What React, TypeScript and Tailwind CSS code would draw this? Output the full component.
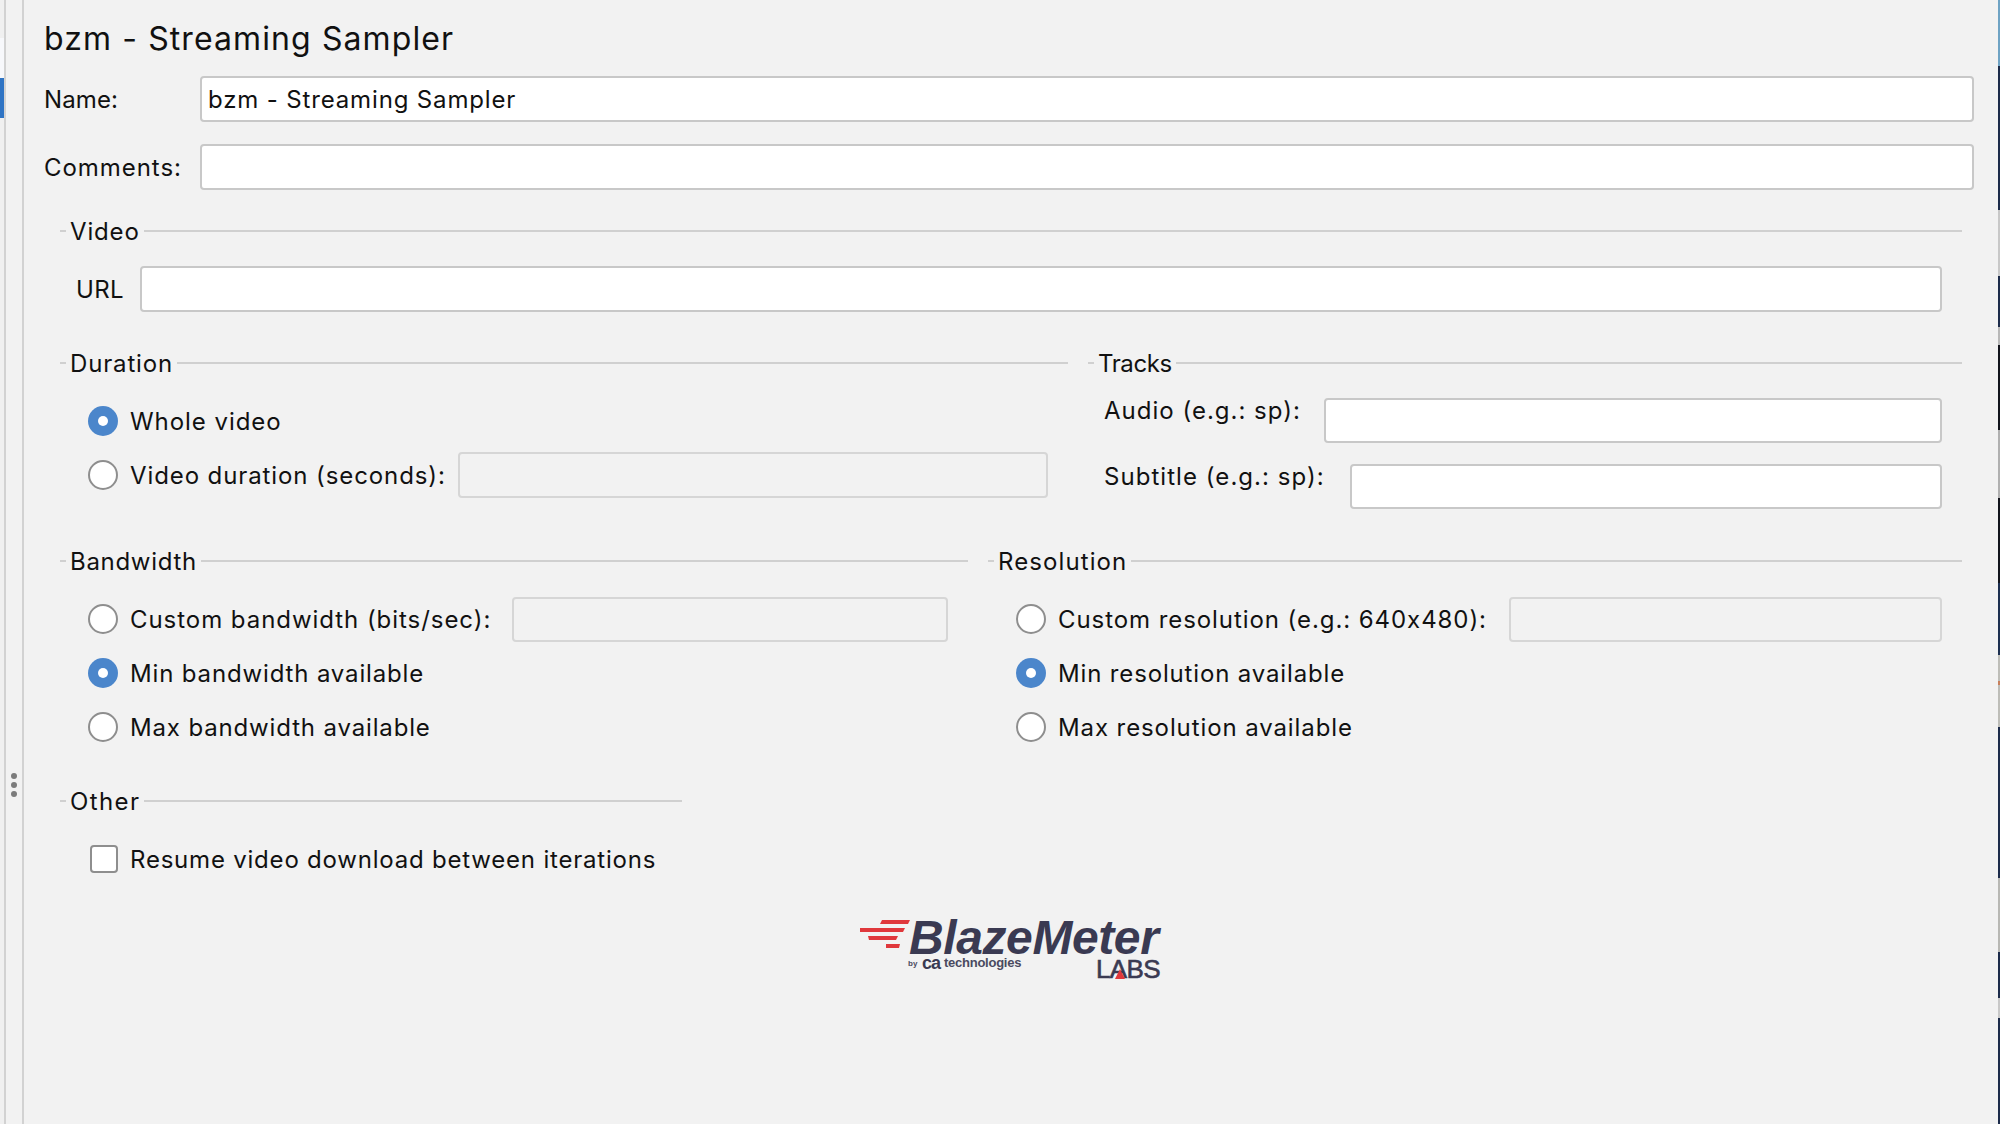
const font = "font-['Inter','Liberation_Sans',sans-serif]";
const text = "pt-[2px] text-[24px] text-[#111] whitespace-nowrap";

function Legend({ label, t = "tracking-[0.85px]" }: { label: string; t?: string }) {
  return (
    <div className="flex h-[30px] items-center">
      <div className="h-[2px] w-[6px] bg-[#d0d0d0]" />
      <span className={`mx-[4px] leading-[30px] ${text} ${t}`}>{label}</span>
      <div className="h-[2px] flex-1 bg-[#d0d0d0]" />
    </div>
  );
}

function Field({ w, h = 46, disabled, value }: { w: string; h?: number; disabled?: boolean; value?: string }) {
  return (
    <div
      className={`${w} ${h === 46 ? "h-[46px]" : "h-[45px]"} flex shrink-0 items-center rounded-[4px] border-2 px-[6px] pt-[2px] text-[24px] tracking-[0.85px] text-[#111] ${
        disabled ? "border-[#d6d6d6] bg-[#f2f2f2]" : "border-[#c8c8c8] bg-white"
      }`}
    >
      {value}
    </div>
  );
}

function Radio({ on }: { on?: boolean }) {
  return on ? (
    <div className="flex h-[30px] w-[30px] shrink-0 items-center justify-center rounded-full bg-[#4b86cb]">
      <div className="h-[10px] w-[10px] rounded-full bg-white" />
    </div>
  ) : (
    <div className="h-[30px] w-[30px] shrink-0 rounded-full border-2 border-[#8e8e8e] bg-white" />
  );
}

function Option({ label, on, field, t = "tracking-[0.85px]" }: { label: string; on?: boolean; field?: React.ReactNode; t?: string }) {
  return (
    <div className="flex h-[46px] items-center">
      <Radio on={on} />
      <span className={`ml-[12px] ${text} ${t}`}>{label}</span>
      {field}
    </div>
  );
}

function Logo() {
  return (
    <div className="relative h-[66px] w-[300px] font-['Liberation_Sans',sans-serif]">
      <svg className="absolute left-0 top-[6px]" width="50" height="30" viewBox="0 0 50 30">
        <g fill="#e0383c">
          <path d="M22 0h28l-2 4H20z" />
          <path d="M0 8h45l-2 4H0z" />
          <path d="M8 16h30l-2 4H9z" />
          <path d="M26 24h14l-1 4H26z" />
        </g>
      </svg>
      <span className="absolute left-[49px] top-[6px] text-[48px] font-bold italic leading-[36px] tracking-[-0.4px] text-[#3a3a52]">
        BlazeMeter
      </span>
      <span className="absolute left-[48px] top-[45px] text-[8px] font-bold leading-[10px] text-[#4a4a60]">by</span>
      <span className="absolute left-[62px] top-[42px] text-[18px] font-bold leading-[14px] tracking-[-1px] text-[#3a3a52]">ca</span>
      <span className="absolute left-[84px] top-[42px] text-[13px] font-bold leading-[14px] tracking-[-0.25px] text-[#4a4a60]">technologies</span>
      <span className="absolute left-[236px] top-[43px] text-[26px] leading-[24px] tracking-[-0.6px] text-[#3a3a52] [-webkit-text-stroke:0.6px_#3a3a52]">LABS</span>
      <svg className="absolute left-[254px] top-[54px]" width="12" height="11" viewBox="0 0 12 11">
        <path d="M6 1l5 10H1z" fill="#e0383c" />
      </svg>
    </div>
  );
}

const strip: [number, string][] = [
  [66, "bg-[#6fa3c4]"],
  [144, "bg-[#1c2b4a]"],
  [66, "bg-[#c8c8c8]"],
  [51, "bg-[#1c2b4a]"],
  [18, "bg-[#b8b8b8]"],
  [85, "bg-[#12141c]"],
  [68, "bg-[#b0b0b0]"],
  [85, "bg-[#12141c]"],
  [72, "bg-[#1c2f50]"],
  [26, "bg-[#bdbdb8]"],
  [4, "bg-[#c8805c]"],
  [42, "bg-[#bdbdb8]"],
  [151, "bg-[#1c2b4a]"],
  [74, "bg-[#b8b8b4]"],
  [46, "bg-[#1c2b4a]"],
  [20, "bg-[#c8c8c8]"],
  [106, "bg-[#1c2b4a]"],
];

export default function App() {
  return (
    <div className={`flex h-[1124px] w-[2000px] overflow-hidden bg-[#f2f2f2] ${font}`}>
      {/* far-left tree sliver */}
      <div className="flex w-[4px] shrink-0 flex-col bg-[#f0f0f0]">
        <div className="h-[38px]" />
        <div className="h-[40px] bg-[#f7f8fb]" />
        <div className="h-[40px] bg-[#2f74c4]" />
      </div>
      {/* split pane divider */}
      <div className="flex w-[20px] shrink-0 items-start border-x-2 border-[#d2d2d2] bg-[#f2f2f2]">
        <div className="ml-[5px] mt-[773px] flex flex-col gap-[3px]">
          <div className="h-[6px] w-[6px] rounded-full bg-[#7c7c7c]" />
          <div className="h-[6px] w-[6px] rounded-full bg-[#7c7c7c]" />
          <div className="h-[6px] w-[6px] rounded-full bg-[#7c7c7c]" />
        </div>
      </div>

      {/* main */}
      <div className="flex min-w-0 flex-1 flex-col pl-[20px] pr-[24px]">
        <div className="h-[76px] pt-[19px] text-[32px] leading-[40px] tracking-[1.1px] text-[#111]">bzm - Streaming Sampler</div>

        <div className="flex h-[46px] items-center">
          <span className={`w-[156px] tracking-[0.1px] ${text}`}>Name:</span>
          <Field w="flex-1" value="bzm - Streaming Sampler" />
        </div>
        <div className="mt-[22px] flex h-[46px] items-center">
          <span className={`w-[156px] tracking-[0.95px] ${text}`}>Comments:</span>
          <Field w="flex-1" />
        </div>

        <div className="ml-[16px] mr-[12px] flex flex-col">
          {/* Video */}
          <div className="mt-[26px]">
            <Legend label="Video" />
            <div className="mt-[20px] flex h-[46px] items-center pl-[16px] pr-[20px]">
              <span className={`w-[64px] tracking-[0.4px] ${text}`}>URL</span>
              <Field w="flex-1" />
            </div>
          </div>

          {/* Duration + Tracks */}
          <div className="mt-[36px] flex gap-[20px]">
            <div className="w-[1008px]">
              <Legend label="Duration" />
              <div className="mt-[20px] flex flex-col gap-[8px] pl-[28px] pr-[20px]">
                <Option label="Whole video" on t="tracking-[0.95px]" />
                <Option
                  label="Video duration (seconds):"
                  t="tracking-[0.9px]"
                  field={
                    <div className="ml-[12px] flex-1">
                      <Field w="w-full" disabled />
                    </div>
                  }
                />
              </div>
            </div>
            <div className="flex-1">
              <Legend label="Tracks" t="tracking-[-0.4px]" />
              <div className="mt-[20px] pl-[16px] pr-[20px]">
                <div className="flex h-[45px] items-start">
                  <span className={`w-[220px] leading-[22px] tracking-[1px] ${text}`}>Audio (e.g.: sp):</span>
                  <Field w="flex-1" h={45} />
                </div>
                <div className="mt-[21px] flex h-[45px] items-start">
                  <span className={`w-[246px] leading-[22px] tracking-[1.05px] ${text}`}>Subtitle (e.g.: sp):</span>
                  <Field w="flex-1" h={45} />
                </div>
              </div>
            </div>
          </div>

          {/* Bandwidth + Resolution */}
          <div className="mt-[37px] flex gap-[20px]">
            <div className="w-[908px]">
              <Legend label="Bandwidth" t="tracking-[0.7px]" />
              <div className="mt-[20px] flex flex-col gap-[8px] pl-[28px] pr-[20px]">
                <Option
                  label="Custom bandwidth (bits/sec):"
                  t="tracking-[0.95px]"
                  field={
                    <div className="ml-[21px] flex-1">
                      <Field w="w-full" h={45} disabled />
                    </div>
                  }
                />
                <Option label="Min bandwidth available" on />
                <Option label="Max bandwidth available" />
              </div>
            </div>
            <div className="flex-1">
              <Legend label="Resolution" t="tracking-[1.1px]" />
              <div className="mt-[20px] flex flex-col gap-[8px] pl-[28px] pr-[20px]">
                <Option
                  label="Custom resolution (e.g.: 640x480):"
                  t="tracking-[0.93px]"
                  field={
                    <div className="ml-[22px] flex-1">
                      <Field w="w-full" h={45} disabled />
                    </div>
                  }
                />
                <Option label="Min resolution available" on />
                <Option label="Max resolution available" t="tracking-[0.9px]" />
              </div>
            </div>
          </div>

          {/* Other */}
          <div className="mt-[36px] w-[622px]">
            <Legend label="Other" t="tracking-[1.4px]" />
            <div className="mt-[28px] flex h-[30px] items-center pl-[30px]">
              <div className="h-[28px] w-[28px] rounded-[4px] border-2 border-[#8e8e8e] bg-white" />
              <span className={`ml-[12px] tracking-[0.79px] ${text}`}>Resume video download between iterations</span>
            </div>
          </div>
        </div>

        <div className="ml-[816px] mt-[40px]">
          <Logo />
        </div>
      </div>

      {/* sliver of the neighbouring window */}
      <div className="flex w-[2px] shrink-0 flex-col">
        {strip.map(([h, c], i) => (
          <div key={i} className={c} style={{ height: h }} />
        ))}
      </div>
    </div>
  );
}
